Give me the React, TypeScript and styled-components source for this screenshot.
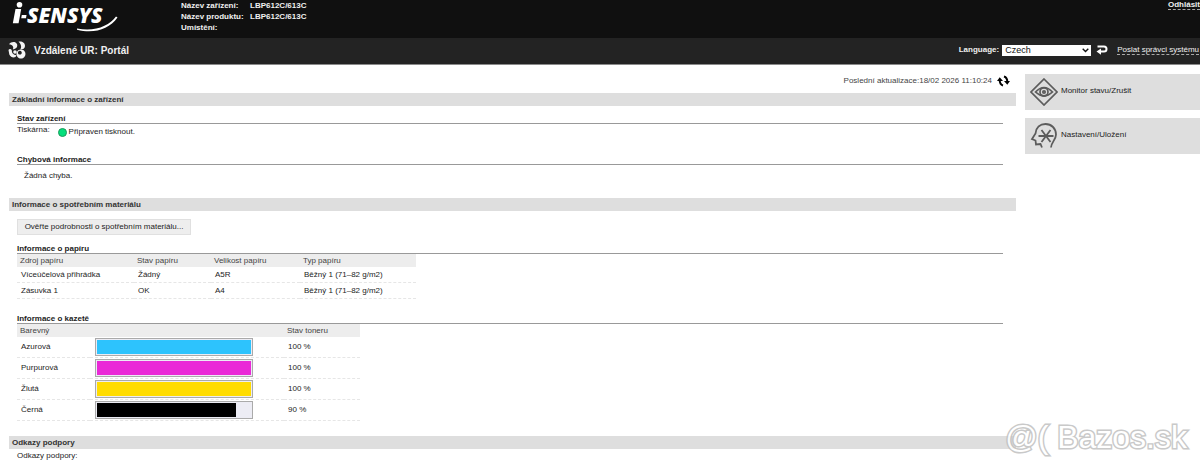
import React from "react";
import styled, { createGlobalStyle } from "styled-components";

const GlobalStyle = createGlobalStyle`
  * { box-sizing: border-box; }
  body {
    margin: 0;
    background: #fff;
    color: #1c1c1c;
    font: 8px/12px "Liberation Sans", Arial, sans-serif;
    overflow-x: hidden;
  }
`;

const Page = styled.div`
  position: relative;
`;

const TopBar = styled.header`
  display: flex;
  height: 38px;
  background: #101010;
  color: #f0f0f0;
  overflow: hidden;
`;

const LogoBox = styled.div`
  flex: 0 0 181px;
  padding-left: 8px;
`;

const DeviceList = styled.dl`
  display: grid;
  grid-template-columns: 69px auto;
  grid-auto-rows: 11px;
  align-content: start;
  margin: 0;
  font-weight: bold;
  line-height: 12px;
`;

const DeviceValue = styled.dd`
  margin: 0;
`;

const TopLink = styled.a<{ $bold?: boolean }>`
  align-self: flex-start;
  margin-left: auto;
  line-height: 9px;
  color: #f0f0f0;
  font-weight: ${(p) => (p.$bold ? "bold" : "normal")};
  text-decoration: none;
  border-bottom: 1px dashed #aaa;
`;

const TitleBar = styled.div`
  display: flex;
  align-items: center;
  height: 27px;
  padding: 0 1px 2px 8px;
  background: #232323;
  border-bottom: 1px solid #8a8a8a;
  color: #f0f0f0;
`;

const Title = styled.h1`
  margin: 0 auto 0 8px;
  padding-top: 2px;
  font-size: 10px;
  line-height: 12px;
`;

const LanguageLabel = styled.label`
  margin-right: 3px;
  font-weight: bold;
`;

const LanguageSelect = styled.select`
  appearance: none;
  width: 89px;
  height: 11px;
  padding: 0 3px;
  border: 0;
  border-radius: 0;
  background: #fff;
  color: #111;
  font: 9px/11px "Liberation Sans", Arial, sans-serif;
`;

const SelectWrap = styled.span`
  display: grid;
  align-items: center;
  & > * { grid-area: 1 / 1; }
  & > svg { justify-self: end; margin-right: 2px; pointer-events: none; }
`;

const IconButton = styled.button`
  display: flex;
  padding: 0;
  border: 0;
  background: none;
  color: inherit;
`;

const AdminLink = styled(TopLink)`
  align-self: center;
  margin-left: 9px;
`;

const ApplyButton = styled(IconButton)`
  margin-left: 5px;
`;

const Columns = styled.div`
  display: grid;
  grid-template-columns: minmax(0, 1fr) 175px;
  column-gap: 9px;
  padding-left: 9px;
`;

const Updated = styled.div`
  display: flex;
  align-items: center;
  justify-content: flex-end;
  gap: 5px;
  height: 28px;
  padding: 4px 6px 0 0;
  color: #444;
`;

const SectionTitle = styled.h2`
  margin: 0;
  padding-left: 3px;
  height: 13px;
  background: #dedede;
  color: #333;
  font-size: 8px;
  line-height: 14px;
`;

const SectionBody = styled.div`
  padding: 8px 13px 0 8px;
`;

const SubTitle = styled.h3`
  margin: 0;
  height: 10px;
  border-bottom: 1px solid #999;
  font-size: 8px;
  line-height: 9px;
`;

const StatusBlock = styled.section`
  height: 41px;
  margin-bottom: ${(p: { $last?: boolean }) => (p.$last ? "2px" : "0")};
`;

const StatusRow = styled.div`
  display: flex;
  gap: 8px;
`;

const StatusValue = styled.span`
  display: flex;
  align-items: center;
  gap: 2px;
  padding-top: 2px;
`;

const Lamp = styled.span`
  width: 9px;
  height: 9px;
  border: 1px solid #1d9a5c;
  border-radius: 50%;
  background: #05df7c;
`;

const ErrorText = styled.p`
  margin: 0;
  padding: 5px 0 0 7px;
`;

const DetailsButton = styled.button`
  display: block;
  width: 174px;
  height: 16px;
  margin-bottom: 9px;
  padding: 0;
  border: 1px solid #e0e0e0;
  background: #eee;
  color: #1c1c1c;
  font: 8px/14px "Liberation Sans", Arial, sans-serif;
`;

const DataTable = styled.table<{ $width: number }>`
  width: ${(p) => p.$width}px;
  border-collapse: separate;
  border-spacing: 0;
  table-layout: fixed;
`;

const HeadCell = styled.th<{ $width?: number }>`
  width: ${(p) => (p.$width ? `${p.$width}px` : "auto")};
  height: 13px;
  padding: 0 3px;
  background: #ededed;
  color: #444;
  font-weight: normal;
  line-height: 12px;
  text-align: left;
`;

const Cell = styled.td<{ $height: number }>`
  height: ${(p) => p.$height}px;
  padding: 0 4px;
  border-bottom: 1px dashed #e6e6e6;
  white-space: nowrap;
`;

const BarCell = styled(Cell)`
  padding: 0 5px;
`;

const Gauge = styled.div`
  width: 158px;
  height: 18px;
  padding: 1px;
  border: 1px solid #aaa;
  background: #ececf4;
`;

const GaugeFill = styled.div`
  height: 14px;
`;

const PaperBlock = styled.section`
  height: 70px;
`;

const TonerBlock = styled.section`
  height: 122px;
`;

const SupportText = styled.p`
  margin: 0;
  padding: 1px 0 0 8px;
`;

const Menu = styled.nav`
  display: flex;
  flex-direction: column;
  gap: 8px;
  padding-top: 9px;
`;

const MenuLink = styled.a`
  display: flex;
  align-items: center;
  gap: 3px;
  height: 36px;
  padding-left: 5px;
  background: #dedede;
  color: #222;
  line-height: 10px;
  text-decoration: none;
`;

const MenuText = styled.span`
  padding-bottom: 2px;
`;

const Watermark = styled.div`
  position: absolute;
  right: 13px;
  bottom: 6px;
  font-size: 32px;
  line-height: 38px;
  color: #fff;
  -webkit-text-stroke: 3px #c0c0c0;
  paint-order: stroke;
  opacity: 0.85;
  white-space: nowrap;
`;

const Logo = () => (
  <svg width="114" height="36" viewBox="8 0 114 36" role="img" aria-label="i-SENSYS" fill="#fff">
    <circle cx="19.500" cy="4.700" r="2.800" />
    <path d="M15.500 9H21.200L18.600 23.300H12.800Z" />
    <path d="M21.800 15H26.500L26 18.200H21.200Z" />
    <text x="27" y="23.300" fontFamily="Open Sans" fontSize="21" fontWeight="800" fontStyle="italic">SENSYS</text>
    <path d="M77 28.500C95 32 109 26 116 16.500L117.500 17.500C109 29.500 94 34 77 29.800Z" />
  </svg>
);

const PortalIcon = () => (
  <svg width="18" height="18" viewBox="0 0 18 18" aria-hidden="true" fill="#f4f4f4">
    <path d="M1 3.200C3 .5 7.500 0 9 3C10 6 8 8.200 4.800 8.300C6 6 5 4 1 3.200Z" />
    <path d="M10.500 .8C14 0 17 2 17 5C17 7.500 15 8.500 12.300 8.500C14 6 13 3 10.500 .8Z" />
    <path d="M.5 9C1 7.600 3 7.600 3.700 9C3.700 12.500 5.500 14 8.300 14.200C8 17.300 3 17.300 1.300 13.500Z" />
    <circle cx="7" cy="11" r="1.800" />
    <path fillRule="evenodd" d="M13 8.500A4.500 4.500 0 1 1 12.900 8.500ZM11.800 9.800A1.900 1.900 0 1 0 11.900 9.800Z" />
  </svg>
);

const ReturnIcon = () => (
  <svg width="12" height="10" viewBox="0 0 12 10" aria-hidden="true">
    <path d="M1.500 1.500H8Q10.500 1.500 10.500 4Q10.500 6.500 8 6.500H4" fill="none" stroke="#fff" strokeWidth="2" />
    <path d="M.5 6.500L5 3.500V9.700Z" fill="#fff" />
  </svg>
);

const RefreshIcon = () => (
  <svg width="13" height="12" viewBox="0 0 13 12" aria-hidden="true">
    <path d="M6 10.500Q2.700 9.500 2.700 5M7 1.500Q10.300 2.500 10.300 7" fill="none" stroke="#000" strokeWidth="2" />
    <path d="M0 6L2.700 2.300L6 6ZM7 6L10.300 9.700L13 6Z" fill="#000" />
  </svg>
);

const MonitorIcon = () => (
  <svg width="28" height="28" viewBox="0 0 28 28" aria-hidden="true" fill="none" stroke="#5c5c5c" strokeWidth="1.700">
    <path d="M14 1L27 14L14 27L1 14Z" />
    <path d="M5.500 14Q14 5 22.500 14Q14 22 5.500 14Z" />
    <circle cx="14" cy="14" r="4" />
    <circle cx="14" cy="14" r="1.200" />
  </svg>
);

const SettingsIcon = () => (
  <svg width="28" height="28" viewBox="0 0 28 28" aria-hidden="true" fill="none" stroke="#5c5c5c" strokeWidth="1.800">
    <path d="M12 25.500L10.500 22L6 22.500L5.500 18.500L2 17L5.500 11.500C6 5.500 10 2 15.500 2C21.500 2 26 6.500 26 12.500C26 18 21.500 19.500 21 25.500" />
    <path d="M8.500 14H23.500M11.500 8L20.500 20M20.500 8L11.500 20" />
  </svg>
);

const papers = [
  ["Víceúčelová přihrádka", "Žádný", "A5R", "Běžný 1 (71–82 g/m2)"],
  ["Zásuvka 1", "OK", "A4", "Běžný 1 (71–82 g/m2)"],
];

const toners = [
  { name: "Azurová", color: "#2dc3fd", level: 100 },
  { name: "Purpurová", color: "#ea29d7", level: 100 },
  { name: "Žlutá", color: "#ffdc00", level: 100 },
  { name: "Černá", color: "#000", level: 90 },
];

export default function App() {
  return (
    <Page>
      <GlobalStyle />
      <TopBar>
        <LogoBox><Logo /></LogoBox>
        <DeviceList>
          <dt>Název zařízení:</dt><DeviceValue>LBP612C/613C</DeviceValue>
          <dt>Název produktu:</dt><DeviceValue>LBP612C/613C</DeviceValue>
          <dt>Umístění:</dt><DeviceValue />
        </DeviceList>
        <TopLink href="#logout" $bold>Odhlásit</TopLink>
      </TopBar>
      <TitleBar>
        <PortalIcon />
        <Title>Vzdálené UR: Portál</Title>
        <LanguageLabel htmlFor="language">Language:</LanguageLabel>
        <SelectWrap>
          <LanguageSelect id="language" defaultValue="cs">
            <option value="cs">Czech</option>
          </LanguageSelect>
          <svg width="7" height="5" viewBox="0 0 7 5" aria-hidden="true">
            <path d="M.7 .8L3.500 3.600L6.300 .8" fill="none" stroke="#111" strokeWidth="1.400" />
          </svg>
        </SelectWrap>
        <ApplyButton aria-label="Language"><ReturnIcon /></ApplyButton>
        <AdminLink href="#admin">Poslat správci systému</AdminLink>
      </TitleBar>
      <Columns>
        <main>
          <Updated>
            <span>Poslední aktualizace:18/02 2026 11:10:24</span>
            <IconButton aria-label="Aktualizace"><RefreshIcon /></IconButton>
          </Updated>

          <SectionTitle>Základní informace o zařízení</SectionTitle>
          <SectionBody>
            <StatusBlock>
              <SubTitle>Stav zařízení</SubTitle>
              <StatusRow>
                <span>Tiskárna:</span>
                <StatusValue><Lamp />Připraven tisknout.</StatusValue>
              </StatusRow>
            </StatusBlock>
            <StatusBlock $last>
              <SubTitle>Chybová informace</SubTitle>
              <ErrorText>Žádná chyba.</ErrorText>
            </StatusBlock>
          </SectionBody>

          <SectionTitle>Informace o spotřebním materiálu</SectionTitle>
          <SectionBody>
            <DetailsButton>Ověřte podrobnosti o spotřebním materiálu...</DetailsButton>
            <PaperBlock>
              <SubTitle>Informace o papíru</SubTitle>
              <DataTable $width={399}>
                <thead>
                  <tr>
                    <HeadCell $width={117}>Zdroj papíru</HeadCell>
                    <HeadCell $width={77}>Stav papíru</HeadCell>
                    <HeadCell $width={89}>Velikost papíru</HeadCell>
                    <HeadCell>Typ papíru</HeadCell>
                  </tr>
                </thead>
                <tbody>
                  {papers.map((row) => (
                    <tr key={row[0]}>
                      {row.map((value) => <Cell key={value} $height={16}>{value}</Cell>)}
                    </tr>
                  ))}
                </tbody>
              </DataTable>
            </PaperBlock>
            <TonerBlock>
              <SubTitle>Informace o kazetě</SubTitle>
              <DataTable $width={343}>
                <thead>
                  <tr>
                    <HeadCell $width={73}>Barevný</HeadCell>
                    <HeadCell $width={194} />
                    <HeadCell>Stav toneru</HeadCell>
                  </tr>
                </thead>
                <tbody>
                  {toners.map((toner) => (
                    <tr key={toner.name}>
                      <Cell $height={21}>{toner.name}</Cell>
                      <BarCell $height={21}>
                        <Gauge>
                          <GaugeFill style={{ width: `${toner.level}%`, background: toner.color }} />
                        </Gauge>
                      </BarCell>
                      <Cell $height={21}>{toner.level} %</Cell>
                    </tr>
                  ))}
                </tbody>
              </DataTable>
            </TonerBlock>
          </SectionBody>

          <SectionTitle>Odkazy podpory</SectionTitle>
          <SupportText>Odkazy podpory:</SupportText>
        </main>
        <Menu>
          <MenuLink href="#status"><MonitorIcon /><MenuText>Monitor stavu/Zrušit</MenuText></MenuLink>
          <MenuLink href="#settings"><SettingsIcon /><MenuText>Nastavení/Uložení</MenuText></MenuLink>
        </Menu>
      </Columns>
      <Watermark>@( Bazos.sk</Watermark>
    </Page>
  );
}
